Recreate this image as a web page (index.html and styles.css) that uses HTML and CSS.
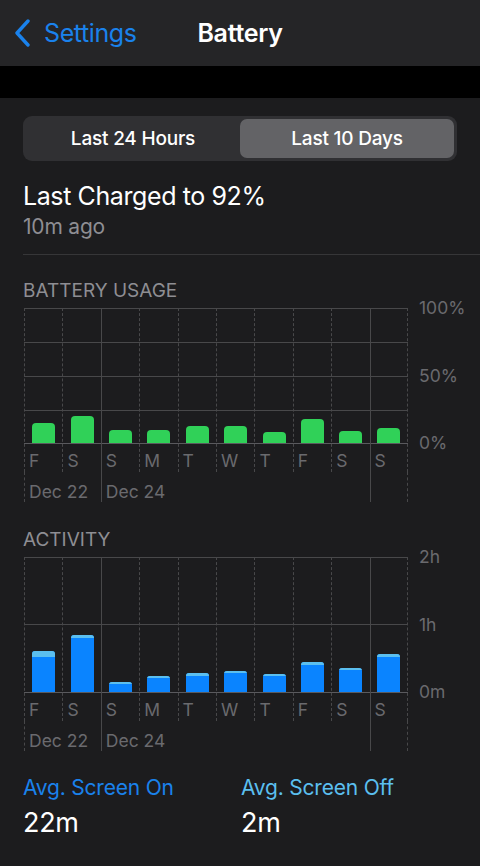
FILE: index.html
```html
<!DOCTYPE html>
<html lang="en">
<head>
  <meta charset="UTF-8">
  <meta name="viewport" content="width=device-width, initial-scale=1.0">
  <title>Battery</title>
  <link rel="stylesheet" href="styles.css">
</head>
<body>
  <header class="nav">
    <a class="back" href="#">
      <svg class="chevron" width="16" height="28" viewBox="0 0 16 28">
        <polyline points="14,2 3,14 14,26" fill="none" stroke="currentColor" stroke-width="3.4" stroke-linecap="round" stroke-linejoin="round"/>
      </svg>
      <span>Settings</span>
    </a>
    <h1 class="nav-title">Battery</h1>
  </header>

  <div class="strip"></div>

  <main class="content">
    <div class="segmented">
      <div class="segment">Last 24 Hours</div>
      <div class="segment active">Last 10 Days</div>
    </div>

    <div class="charged">
      <div class="charged-title">Last Charged to 92%</div>
      <div class="charged-sub">10m ago</div>
    </div>

    <hr class="separator">

    <!-- battery usage -->
    <section class="chart-block">
      <h2 class="chart-title">BATTERY USAGE</h2>
      <div class="chart">
        <div class="plot plot-battery">
          <div class="day"><div class="bar-cell"><div class="bar green" style="height:20px"></div></div><span class="day-label">F</span></div>
          <div class="day"><div class="bar-cell"><div class="bar green" style="height:27px"></div></div><span class="day-label">S</span></div>
          <div class="day solid"><div class="bar-cell"><div class="bar green" style="height:13px"></div></div><span class="day-label">S</span></div>
          <div class="day"><div class="bar-cell"><div class="bar green" style="height:13px"></div></div><span class="day-label">M</span></div>
          <div class="day"><div class="bar-cell"><div class="bar green" style="height:17px"></div></div><span class="day-label">T</span></div>
          <div class="day"><div class="bar-cell"><div class="bar green" style="height:17px"></div></div><span class="day-label">W</span></div>
          <div class="day"><div class="bar-cell"><div class="bar green" style="height:11px"></div></div><span class="day-label">T</span></div>
          <div class="day"><div class="bar-cell"><div class="bar green" style="height:24px"></div></div><span class="day-label">F</span></div>
          <div class="day"><div class="bar-cell"><div class="bar green" style="height:12px"></div></div><span class="day-label">S</span></div>
          <div class="day solid last"><div class="bar-cell"><div class="bar green" style="height:15px"></div></div><span class="day-label">S</span></div>

          <div class="date span-2">Dec 22</div>
          <div class="date span-7 solid">Dec 24</div>
          <div class="date solid last"></div>
        </div>
        <div class="y-axis">
          <span>100%</span>
          <span>50%</span>
          <span>0%</span>
        </div>
      </div>
    </section>

    <!-- activity -->
    <section class="chart-block">
      <h2 class="chart-title">ACTIVITY</h2>
      <div class="chart">
        <div class="plot plot-activity">
          <div class="day"><div class="bar-cell"><div class="bar blue" style="height:41px"><div class="bar-off" style="height:6px"></div></div></div><span class="day-label">F</span></div>
          <div class="day"><div class="bar-cell"><div class="bar blue" style="height:57px"><div class="bar-off" style="height:3px"></div></div></div><span class="day-label">S</span></div>
          <div class="day solid"><div class="bar-cell"><div class="bar blue" style="height:10px"><div class="bar-off" style="height:2px"></div></div></div><span class="day-label">S</span></div>
          <div class="day"><div class="bar-cell"><div class="bar blue" style="height:16px"><div class="bar-off" style="height:2px"></div></div></div><span class="day-label">M</span></div>
          <div class="day"><div class="bar-cell"><div class="bar blue" style="height:19px"><div class="bar-off" style="height:3px"></div></div></div><span class="day-label">T</span></div>
          <div class="day"><div class="bar-cell"><div class="bar blue" style="height:21px"><div class="bar-off" style="height:2px"></div></div></div><span class="day-label">W</span></div>
          <div class="day"><div class="bar-cell"><div class="bar blue" style="height:18px"><div class="bar-off" style="height:2px"></div></div></div><span class="day-label">T</span></div>
          <div class="day"><div class="bar-cell"><div class="bar blue" style="height:30px"><div class="bar-off" style="height:3px"></div></div></div><span class="day-label">F</span></div>
          <div class="day"><div class="bar-cell"><div class="bar blue" style="height:24px"><div class="bar-off" style="height:2px"></div></div></div><span class="day-label">S</span></div>
          <div class="day solid last"><div class="bar-cell"><div class="bar blue" style="height:38px"><div class="bar-off" style="height:3px"></div></div></div><span class="day-label">S</span></div>

          <div class="date span-2">Dec 22</div>
          <div class="date span-7 solid">Dec 24</div>
          <div class="date solid last"></div>
        </div>
        <div class="y-axis">
          <span>2h</span>
          <span>1h</span>
          <span>0m</span>
        </div>
      </div>
    </section>

    <div class="stats">
      <div class="stat">
        <div class="stat-label on">Avg. Screen On</div>
        <div class="stat-value">22m</div>
      </div>
      <div class="stat">
        <div class="stat-label off">Avg. Screen Off</div>
        <div class="stat-value">2m</div>
      </div>
    </div>
  </main>
</body>
</html>
```

FILE: styles.css
```css
/* colours */
:root {
  --bg: #1c1c1e;
  --nav-bg: #252527;
  --blue: #1a82ec;
  --light-blue: #5bbfef;
  --green: #30d158;
  --grid: #48484a;
  --grid-base: #5a5a5e;
  --axis-text: #6a6a6e;
  --sub-text: #8e8e93;
}

* {
  box-sizing: border-box;
}

body {
  margin: 0;
  background: var(--bg);
  color: #fff;
  font-family: Inter, "Noto Sans", sans-serif;
  -webkit-font-smoothing: antialiased;
}

/* nav bar */
.nav {
  height: 66px;
  background: var(--nav-bg);
  display: flex;
  align-items: center;
  justify-content: center;
  position: relative;
}

.back {
  position: absolute;
  left: 14px;
  top: 0;
  height: 66px;
  display: flex;
  align-items: center;
  gap: 14px;
  color: var(--blue);
  text-decoration: none;
  font-size: 25px;
  letter-spacing: -0.4px;
}

.chevron {
  display: block;
}

.nav-title {
  margin: 0;
  font-size: 25px;
  font-weight: 600;
  letter-spacing: -0.3px;
}

.strip {
  height: 32px;
  background: #000;
}

/* main content */
.content {
  padding: 18px 0 0 23px;
}

.segmented {
  width: 434px;
  height: 45px;
  padding: 3px;
  border-radius: 9px;
  background: #303033;
  display: grid;
  grid-template-columns: 1fr 1fr;
}

.segment {
  display: flex;
  align-items: center;
  justify-content: center;
  font-size: 19px;
  font-weight: 500;
  letter-spacing: -0.2px;
  border-radius: 7px;
}

.segment.active {
  background: #636366;
}

.charged {
  padding-top: 19px;
}

.charged-title {
  font-size: 25px;
  line-height: 32px;
  letter-spacing: -0.4px;
}

.charged-sub {
  font-size: 21px;
  line-height: 30px;
  color: var(--sub-text);
  letter-spacing: -0.2px;
}

.separator {
  margin: 12px 0 0;
  border: 0;
  border-top: 1px solid #363638;
}

/* charts */
.chart-block {
  padding-top: 25px;
}

.chart-block + .chart-block {
  padding-top: 27px;
}

.chart-title {
  margin: 0 0 6px;
  font-size: 19px;
  font-weight: 400;
  line-height: 22px;
  color: var(--sub-text);
}

.chart {
  display: flex;
  padding-left: 1px;
}

.plot {
  width: 384px;
  display: grid;
  grid-template-columns: repeat(10, 1fr);
  background-repeat: no-repeat;
  background-size: 100% 136px;
}

.plot-battery {
  background-image: linear-gradient(to bottom,
    var(--grid) 0 1px, transparent 1px 34px,
    var(--grid) 34px 35px, transparent 35px 68px,
    var(--grid) 68px 69px, transparent 69px 102px,
    var(--grid) 102px 103px, transparent 103px 135px,
    var(--grid-base) 135px 136px);
}

.plot-activity {
  background-image: linear-gradient(to bottom,
    var(--grid) 0 1px, transparent 1px 67px,
    var(--grid) 67px 68px, transparent 68px 135px,
    var(--grid-base) 135px 136px);
}

.day {
  display: flex;
  flex-direction: column;
  border-left: 1px dashed var(--grid);
}

.solid {
  border-left-style: solid;
}

.last {
  border-right: 1px dashed var(--grid);
}

.bar-cell {
  height: 135px;
  display: flex;
  align-items: flex-end;
  justify-content: center;
}

.bar {
  width: 23px;
  border-radius: 4px 4px 0 0;
  overflow: hidden;
}

.bar.green {
  background: var(--green);
}

.bar.blue {
  background: #0a84ff;
  border-radius: 3px 3px 0 0;
}

.bar-off {
  background: var(--light-blue);
}

.day-label {
  height: 29px;
  padding: 8px 0 0 4px;
  font-size: 17.5px;
  line-height: 20px;
  color: var(--axis-text);
}

.date {
  height: 30px;
  padding: 10px 0 0 4px;
  font-size: 17.5px;
  line-height: 20px;
  color: var(--axis-text);
  border-left: 1px dashed var(--grid);
}

.date.solid {
  border-left-style: solid;
}

.span-2 {
  grid-column: span 2;
}

.span-7 {
  grid-column: span 7;
}

.y-axis {
  height: 135px;
  padding-left: 11px;
  display: flex;
  flex-direction: column;
  justify-content: space-between;
  font-size: 17.5px;
  color: var(--axis-text);
}

.y-axis span {
  line-height: 20px;
  margin: -10px 0;
}

/* summary */
.stats {
  display: grid;
  grid-template-columns: 218px 1fr;
  padding-top: 24px;
}

.stat-label {
  font-size: 21px;
  line-height: 26px;
  letter-spacing: -0.2px;
}

.stat-label.on {
  color: var(--blue);
}

.stat-label.off {
  color: var(--light-blue);
}

.stat-value {
  padding-top: 4px;
  font-size: 27px;
  line-height: 36px;
  letter-spacing: -0.3px;
}
```
